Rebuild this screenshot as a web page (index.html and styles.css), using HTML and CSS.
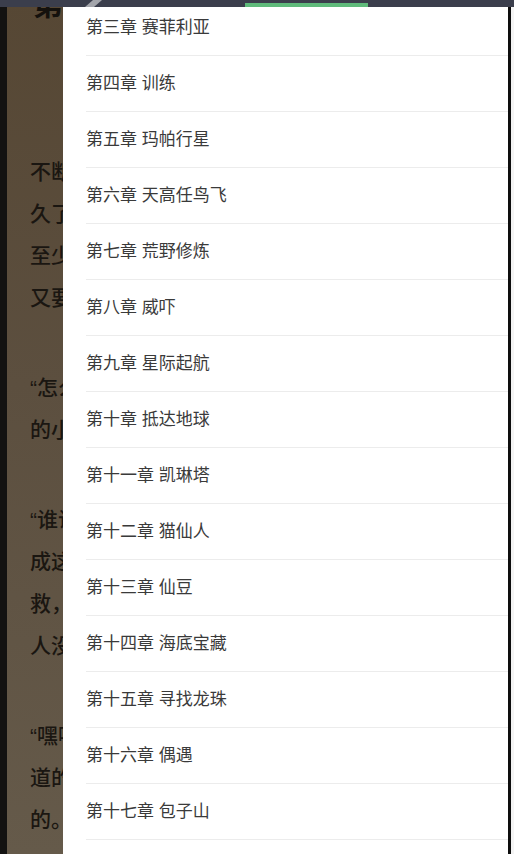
FILE: index.html
```html
<!DOCTYPE html>
<html lang="zh-CN">
<head>
<meta charset="utf-8">
<title>目录</title>
<link rel="stylesheet" href="styles.css">
</head>
<body>
<div class="screen">
  <div class="statusbar">
    <svg class="slash" width="30" height="7" viewBox="0 0 30 7"><polygon points="0,7 9,7 17,0 8,0" fill="#a3a5ab"/></svg>
    <div class="progress"></div>
  </div>
  <div class="frame">
    <div class="edge-left"></div>
    <div class="reader">
      <article class="page">
        <h1 class="chapter-title">第二章 修炼之路</h1>
        <p class="para">
          <span class="ln">不断地修炼，他的实力也在不断地提升，</span>
          <span class="ln">久了之后，他终于感觉到自己的身体有了</span>
          <span class="ln">至少，现在的他已经可以和普通的战士</span>
          <span class="ln">又要面对更强大的敌人了。</span>
        </p>
        <p class="para">
          <span class="ln">“怎么样，你准备好了吗？”贝吉塔看着面前</span>
          <span class="ln">的小家伙问道。</span>
        </p>
        <p class="para">
          <span class="ln">“谁说我没准备好？”悟空笑着说，“我已经</span>
          <span class="ln">成这样了，就算是你们也不需要来</span>
          <span class="ln">救，我自己就可以搞定。”说完，两</span>
          <span class="ln">人没有再说话。</span>
        </p>
        <p class="para">
          <span class="ln">“嘿嘿，”贝吉塔笑了笑，他当然知</span>
          <span class="ln">道的，这个小家伙的实力是毋庸置疑</span>
          <span class="ln">的。</span>
        </p>
      </article>
      <nav class="drawer">
        <ul class="toc">
          <li class="toc-item">第三章 赛菲利亚</li>
          <li class="toc-item">第四章 训练</li>
          <li class="toc-item">第五章 玛帕行星</li>
          <li class="toc-item">第六章 天高任鸟飞</li>
          <li class="toc-item">第七章 荒野修炼</li>
          <li class="toc-item">第八章 威吓</li>
          <li class="toc-item">第九章 星际起航</li>
          <li class="toc-item">第十章 抵达地球</li>
          <li class="toc-item">第十一章 凯琳塔</li>
          <li class="toc-item">第十二章 猫仙人</li>
          <li class="toc-item">第十三章 仙豆</li>
          <li class="toc-item">第十四章 海底宝藏</li>
          <li class="toc-item">第十五章 寻找龙珠</li>
          <li class="toc-item">第十六章 偶遇</li>
          <li class="toc-item">第十七章 包子山</li>
          <li class="toc-item">第十八章 天下第一</li>
        </ul>
      </nav>
    </div>
    <div class="edge-right"></div>
    <div class="edge-white"></div>
  </div>
</div>
</body>
</html>
```

FILE: styles.css
```css
html, body {
  margin: 0;
  padding: 0;
  background: #111;
}

body {
  width: 514px;
  height: 854px;
  overflow: hidden;
  font-family: "Liberation Sans", "Noto Sans CJK SC", sans-serif;
}

.screen {
  position: relative;
  width: 514px;
  height: 854px;
  overflow: hidden;
}

.statusbar {
  position: absolute;
  top: 0;
  left: 0;
  right: 0;
  height: 7px;
  background: #3b3e4c;
  z-index: 5;
  display: flex;
  align-items: flex-start;
}

.slash {
  position: absolute;
  left: 85px;
  top: 0;
}

.progress {
  margin-left: 245px;
  margin-top: 3px;
  width: 123px;
  height: 4px;
  background: #5fba7b;
}

.frame {
  display: flex;
  height: 854px;
}

.edge-left {
  width: 7px;
  flex: none;
  background: #131211;
}

.edge-right {
  width: 3px;
  flex: none;
  background: #0e0e0e;
}

.edge-white {
  width: 3px;
  flex: none;
  background: #f4f4f4;
}

.reader {
  position: relative;
  flex: 1;
  overflow: hidden;
  background: linear-gradient(180deg, #564734 0%, #5c4f3f 45%, #655a4a 100%);
}

.page {
  padding-left: 23px;
  color: #1a1611;
}

.chapter-title {
  margin: -10px 0 0 3px;
  font-size: 30px;
  line-height: 30px;
  font-weight: bold;
  white-space: nowrap;
  color: #14110d;
}

.para {
  margin: 48px 0 0;
  font-size: 21px;
  line-height: 42px;
  font-weight: 500;
}

.chapter-title + .para {
  margin-top: 131px;
}

.ln {
  display: block;
  white-space: nowrap;
}

.drawer {
  position: absolute;
  top: 0;
  left: 56px;
  right: 0;
  bottom: 0;
  background: #ffffff;
  overflow: hidden;
}

.toc {
  list-style: none;
  margin: 0;
  padding: 0 0 0 23px;
}

.toc-item {
  height: 55px;
  line-height: 55px;
  border-bottom: 1px solid #ececec;
  font-size: 17px;
  color: #3a3a3a;
  white-space: nowrap;
}
```
